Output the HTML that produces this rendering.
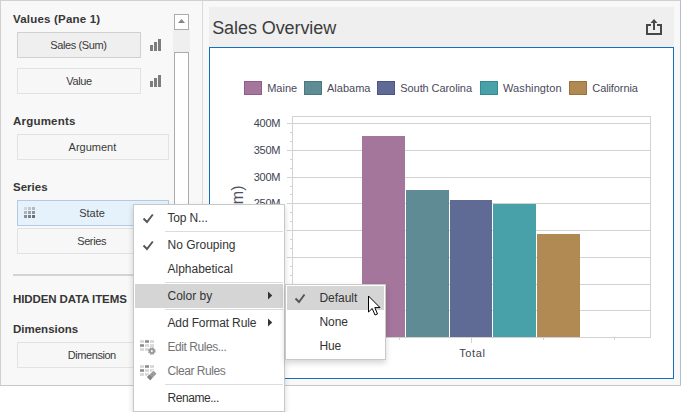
<!DOCTYPE html>
<html>
<head>
<meta charset="utf-8">
<title>Sales Overview</title>
<style>
html,body{margin:0;padding:0;background:#fff;}
body{width:681px;height:412px;position:relative;overflow:hidden;font-family:"Liberation Sans",sans-serif;font-size:11px;color:#333;}
div,span{position:absolute;box-sizing:border-box;white-space:nowrap;}
#frame{left:0;top:0;width:681px;height:386px;background:#f8f8f8;border:1px solid #d0d0d0;border-right-color:#b6bdcb;border-bottom-color:#c8c8c8;}
#vline{left:202px;top:1px;width:1px;height:384px;background:#dadada;}
.lbl{font-weight:bold;font-size:11.5px;line-height:14px;height:14px;color:#363636;left:13px;}
.btn{left:17px;height:26px;border:1px solid #e2e2e2;background:#f7f7f7;text-align:center;line-height:24px;font-size:11px;color:#3a3a3a;}
.btn.w1{width:124px;}
.btn.w2{width:152px;}
.btn.on{background:#efefef;border-color:#d0d0d0;}
.btn.sel{background:#e5f1fb;border-color:#b3c9e6;}
.btn span{position:relative;display:inline-block;}
.sep{left:13px;top:274px;width:160px;height:2px;background:#d4d4d4;}
#sb-up{left:174px;top:14px;width:15px;height:16px;background:#fff;border:1px solid #ababab;}
#sb-track{left:173px;top:30px;width:17px;height:22px;background:#efefef;}
#sb-thumb{left:174px;top:52px;width:15px;height:200px;background:#fff;border:1px solid #ababab;}
#titlebar{left:209px;top:7px;width:465px;height:41px;background:#efefef;}
#title{left:212.2px;top:16.5px;font-size:18px;line-height:22px;color:#3c3c3c;letter-spacing:-0.08px;}
#chart{left:209px;top:47px;width:465px;height:332px;background:#fff;border:1px solid #136fc1;}
svg{position:absolute;left:0;top:0;overflow:visible;}
.menu{background:#fff;border:1px solid #c8c8c8;box-shadow:0 3px 6px rgba(0,0,0,0.17);font-size:12px;color:#333;}
.mi{left:1px;height:24px;line-height:24px;}
.mi span{left:32.5px;top:0;}
.mi.hl{background:#d5d5d5;}
.mi.dis{color:#747474;}
.msep{left:31px;height:1px;background:#dcdcdc;}
</style>
</head>
<body>
<div id="frame"></div>
<div id="vline"></div>

<!-- left panel -->
<span class="lbl" style="top:12px;letter-spacing:0.2px">Values (Pane 1)</span>
<div class="btn w1 on" style="top:32px"><span style="letter-spacing:-0.4px;left:-0.6px">Sales (Sum)</span></div>
<div class="btn w1" style="top:68px"><span style="letter-spacing:-0.4px">Value</span></div>
<span class="lbl" style="top:114px;letter-spacing:0.2px">Arguments</span>
<div class="btn w2" style="top:134px"><span style="left:-0.6px">Argument</span></div>
<span class="lbl" style="top:180px">Series</span>
<div class="btn w2 sel" style="top:200px"><span style="left:-1px">State</span></div>
<div class="btn w2" style="top:228px"><span style="letter-spacing:-0.4px;left:-1.4px">Series</span></div>
<div class="sep"></div>
<span class="lbl" style="top:292px;letter-spacing:-0.1px">HIDDEN DATA ITEMS</span>
<span class="lbl" style="top:322px">Dimensions</span>
<div class="btn w2" style="top:342px"><span style="letter-spacing:-0.45px;left:-1.2px">Dimension</span></div>

<div id="sb-up"></div>
<div id="sb-track"></div>
<div id="sb-thumb"></div>

<!-- right panel -->
<div id="titlebar"></div>
<span id="title">Sales Overview</span>
<div id="chart"></div>

<svg id="gfx" width="681" height="412" viewBox="0 0 681 412" font-family="Liberation Sans, sans-serif" font-size="11">
  <!-- value icons -->
  <g fill="#7d7d7d">
    <rect x="150" y="45" width="3" height="6"/><rect x="154" y="42" width="3" height="9"/><rect x="158" y="39" width="3" height="12"/>
    <rect x="150" y="81" width="3" height="6"/><rect x="154" y="78" width="3" height="9"/><rect x="158" y="75" width="3" height="12"/>
  </g>
  <!-- scroll arrow -->
  <path d="M178 23 L185 23 L181.5 19 Z" fill="#858585"/>
  <!-- drag grid icon -->
  <g>
    <rect x="24" y="207" width="3" height="3" fill="#d0d7dd"/><rect x="28" y="207" width="3" height="3" fill="#c0c6cc"/><rect x="32" y="207" width="3" height="3" fill="#b4b9be"/>
    <rect x="24" y="211" width="3" height="3" fill="#aeb3b8"/><rect x="28" y="211" width="3" height="3" fill="#9da1a5"/><rect x="32" y="211" width="3" height="3" fill="#8e9195"/>
    <rect x="24" y="215" width="3" height="3" fill="#8a8c8e"/><rect x="28" y="215" width="3" height="3" fill="#7d7e80"/><rect x="32" y="215" width="3" height="3" fill="#6f7071"/>
  </g>
  <!-- export icon -->
  <g fill="none" stroke="#484848" stroke-width="2">
    <path d="M651 25 H647 V34 H661 V25 H657"/>
    <path d="M654 30 V21"/>
  </g>
  <path d="M650.5 23 L654 19 L657.5 23 Z" fill="#484848"/>

  <!-- legend -->
  <g stroke-width="1">
    <rect x="244.5" y="81.5" width="17" height="13" fill="#a5769b" stroke="#8f5f86"/>
    <rect x="304.5" y="81.5" width="17" height="13" fill="#5f8b95" stroke="#4a7680"/>
    <rect x="377.5" y="81.5" width="17" height="13" fill="#5f6b95" stroke="#4a5682"/>
    <rect x="480.5" y="81.5" width="17" height="13" fill="#48a0a8" stroke="#358a92"/>
    <rect x="569.5" y="81.5" width="17" height="13" fill="#b08a52" stroke="#99743f"/>
  </g>
  <g fill="#4a4a5c">
    <text x="267.2" y="92">Maine</text>
    <text x="327" y="92">Alabama</text>
    <text x="400.3" y="92" letter-spacing="-0.08">South Carolina</text>
    <text x="503" y="92" letter-spacing="0.1">Washington</text>
    <text x="592.3" y="92" letter-spacing="-0.1">California</text>
  </g>

  <!-- plot -->
  <g stroke="#d2d2d2" stroke-width="1" fill="none" shape-rendering="crispEdges">
    <rect x="292.5" y="116.5" width="358" height="221"/>
    <path d="M287 123.5 H650 M287 150.5 H650 M287 177.5 H650 M287 203.5 H650 M287 230.5 H650 M287 257.5 H650 M287 284.5 H650 M287 310.5 H650"/>
    <path d="M290 132.5 H292 M290 141.5 H292 M290 159.5 H292 M290 168.5 H292 M290 186.5 H292 M290 194.5 H292 M290 212.5 H292 M290 221.5 H292 M290 239.5 H292 M290 248.5 H292 M290 266.5 H292 M290 275.5 H292 M290 293.5 H292 M290 301.5 H292 M290 319.5 H292 M290 328.5 H292"/>
    <path d="M471.5 338 V343 M328.5 338 V340 M399.5 338 V340 M543.5 338 V340 M614.5 338 V340"/>
  </g>
  <g fill="#404452" text-anchor="end" letter-spacing="-0.25">
    <text x="280.2" y="127">400M</text>
    <text x="280.2" y="154">350M</text>
    <text x="280.2" y="181">300M</text>
    <text x="280.2" y="207">250M</text>
  </g>
  <text x="472.4" y="356.7" text-anchor="middle" fill="#404452" letter-spacing="0.65">Total</text>
  <text transform="translate(243,185.5) rotate(-90)" text-anchor="end" font-size="16" fill="#4c5062">Sales (Sum)</text>

  <!-- bars -->
  <rect x="362" y="136" width="43" height="201" fill="#a5769b"/>
  <rect x="406" y="190" width="43" height="147" fill="#5f8b95"/>
  <rect x="450" y="200" width="42" height="137" fill="#5f6b95"/>
  <rect x="493" y="204" width="43" height="133" fill="#48a0a8"/>
  <rect x="537" y="234" width="43" height="103" fill="#b08a52"/>
</svg>

<!-- context menu -->
<div class="menu" id="menu" style="left:133px;top:204px;width:152px;height:208px;">
  <div class="mi" style="top:1px;width:148px"><span style="letter-spacing:-0.15px">Top N...</span></div>
  <div class="msep" style="top:26px;width:118px"></div>
  <div class="mi" style="top:28px;width:148px"><span>No Grouping</span></div>
  <div class="mi" style="top:52px;width:148px"><span>Alphabetical</span></div>
  <div class="msep" style="top:77px;width:118px"></div>
  <div class="mi hl" style="top:79px;width:148px"><span>Color by</span></div>
  <div class="msep" style="top:104px;width:118px"></div>
  <div class="mi" style="top:106px;width:148px"><span style="letter-spacing:-0.13px">Add Format Rule</span></div>
  <div class="mi dis" style="top:130px;width:148px"><span style="letter-spacing:-0.45px">Edit Rules...</span></div>
  <div class="mi dis" style="top:154px;width:148px"><span style="letter-spacing:-0.45px">Clear Rules</span></div>
  <div class="msep" style="top:179px;width:118px"></div>
  <div class="mi" style="top:181px;width:148px"><span style="letter-spacing:-0.45px">Rename...</span></div>
</div>
<div class="menu" id="submenu" style="left:285px;top:284px;width:101px;height:76px;">
  <div class="mi hl" style="top:1px;width:97px"><span style="letter-spacing:-0.05px">Default</span></div>
  <div class="mi" style="top:25px;width:97px"><span style="letter-spacing:-0.1px">None</span></div>
  <div class="mi" style="top:49px;width:97px"><span style="letter-spacing:-0.2px">Hue</span></div>
</div>

<svg id="gfx2" width="681" height="412" viewBox="0 0 681 412">
  <!-- checks -->
  <g fill="none" stroke="#555" stroke-width="1.9">
    <path d="M143.5 218.5 L147 222 L152.8 214.5"/>
    <path d="M143.5 245.5 L147 249 L152.8 241.5"/>
    <path d="M295.5 298.5 L299 302 L304.5 294.5"/>
  </g>
  <!-- submenu arrows -->
  <path d="M268 291.6 L272.2 295.5 L268 299.4 Z" fill="#333"/>
  <path d="M268 318.6 L272.2 322.5 L268 326.4 Z" fill="#333"/>
  <!-- edit rules icon -->
  <g>
    <rect x="140" y="340.2" width="4" height="2.6" fill="#d6d6d6"/>
    <rect x="145" y="340.2" width="4" height="2.6" fill="#8e8e8e"/>
    <rect x="150" y="340.2" width="4" height="2.6" fill="#d6d6d6"/>
    <rect x="140" y="344.2" width="4" height="2.6" fill="#8e8e8e"/>
    <rect x="145" y="344.2" width="4" height="2.6" fill="#d6d6d6"/>
    <rect x="150" y="344.2" width="4" height="2.6" fill="#d6d6d6"/>
    <rect x="140" y="348.2" width="4" height="2.6" fill="#d6d6d6"/>
    <rect x="145" y="348.2" width="4" height="2.6" fill="#d6d6d6"/>
  </g>
  <circle cx="151.8" cy="351" r="3.6" fill="#fff"/>
  <circle cx="151.8" cy="351" r="2.7" fill="none" stroke="#9a9a9a" stroke-width="2.2" stroke-dasharray="1.45 0.67"/>
  <circle cx="151.8" cy="351" r="1.9" fill="none" stroke="#9a9a9a" stroke-width="1.8"/>
  <g>
    <rect x="140" y="365.2" width="4" height="2.6" fill="#d6d6d6"/>
    <rect x="145" y="365.2" width="4" height="2.6" fill="#8e8e8e"/>
    <rect x="150" y="365.2" width="4" height="2.6" fill="#d6d6d6"/>
    <rect x="140" y="369.2" width="4" height="2.6" fill="#8e8e8e"/>
    <rect x="145" y="369.2" width="4" height="2.6" fill="#d6d6d6"/>
    <rect x="150" y="369.2" width="4" height="2.6" fill="#d6d6d6"/>
    <rect x="140" y="373.2" width="4" height="2.6" fill="#d6d6d6"/>
    <rect x="145" y="373.2" width="4" height="2.6" fill="#d6d6d6"/>
  </g>
  <g transform="translate(151.8,375.4) rotate(-45)">
    <rect x="-5" y="-3" width="10" height="6" fill="#fff"/>
    <rect x="-4.5" y="-2.2" width="9" height="4.4" fill="#9c9c9c"/>
    <rect x="-4.5" y="-2.2" width="3.2" height="4.4" fill="#858585"/>
  </g>
  <!-- cursor -->
  <path d="M368.5 296 V312 L372.2 308.5 L375 315 L377.5 314 L374.8 307.6 L380 307.6 Z" fill="#fff" stroke="#000" stroke-width="1" stroke-linejoin="miter"/>
</svg>
</body>
</html>
